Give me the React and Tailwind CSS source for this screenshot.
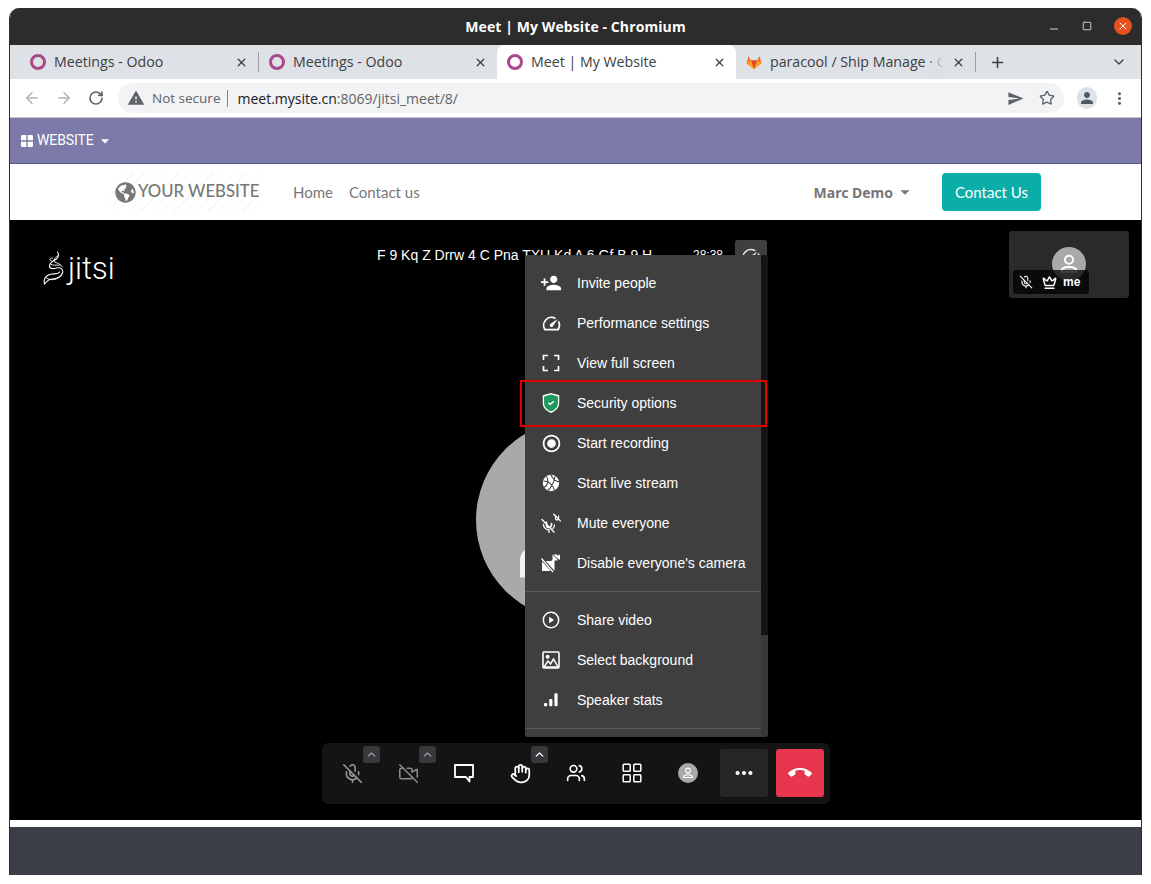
import { ArrowLeft, ArrowRight, RotateCw, Plus, ChevronDown, ChevronUp, X, Star, MicOff, VideoOff, Hand, Users, Ellipsis, Minus, Square, Crown } from 'lucide-react'
import { MdPersonAdd, MdOutlineSpeed, MdRadioButtonChecked, MdSend, MdWarning, MdPerson, MdMoreVert, MdCallEnd, MdWindow, MdArrowDropDown } from 'react-icons/md'
import { FaGlobeAmericas } from 'react-icons/fa'

const ui = 'font-["Open_Sans",sans-serif]'

function OdooFavicon() {
  return <span className="block w-[16px] h-[16px] rounded-full border-[3.5px] border-[#a9498c] shrink-0" />
}

function GitlabIcon() {
  return (
    <svg width="16" height="16" viewBox="0 0 16 16" className="shrink-0">
      <polygon points="8,15 0.5,9.5 2.5,2 4.8,6.5 11.2,6.5 13.5,2 15.5,9.5" fill="#fc6d26" />
      <polygon points="8,15 4.8,6.5 11.2,6.5" fill="#e24329" />
      <polygon points="8,15 0.5,9.5 4.8,6.5" fill="#fca326" />
      <polygon points="8,15 15.5,9.5 11.2,6.5" fill="#fca326" />
    </svg>
  )
}

function Tab({ icon, title, active, width, fade }) {
  return (
    <div className={`relative flex items-center h-[34px] pl-[10px] pr-[10px] gap-[8px] shrink-0 ${active ? 'bg-white rounded-t-lg' : ''}`} style={{ width }}>
      {icon}
      <span className="relative flex-1 overflow-hidden whitespace-nowrap text-[14.2px] text-[#3c4043]">
        {title}
        {fade && <span className="absolute right-0 top-0 bottom-0 w-[18px] bg-gradient-to-r from-transparent to-[#dee1e6]" />}
      </span>
      <X size={13} strokeWidth={2.4} className="text-[#3c4043] shrink-0" />
    </div>
  )
}

function FullscreenIcon() {
  return (
    <svg width="18" height="18" viewBox="0 0 18 18" fill="none" stroke="#fff" strokeWidth="1.7">
      <path d="M1.5 6 V1.5 H6 M12 1.5 H16.5 V6 M16.5 12 V16.5 H12 M6 16.5 H1.5 V12" />
    </svg>
  )
}

function ShieldIcon() {
  return (
    <svg width="22" height="22" viewBox="0 0 20 20">
      <path d="M10 0.8 L17.5 3 V10 C17.5 14.5 14 17.5 10 19 C6 17.5 2.5 14.5 2.5 10 V3 Z" fill="#fff" />
      <path d="M10 2.2 L16.3 4 V10 C16.3 13.8 13.4 16.4 10 17.7 C6.6 16.4 3.7 13.8 3.7 10 V4 Z" fill="#1d9a5b" />
      <path d="M7.6 9.8 L9.2 11.2 L12.6 8.4" stroke="#fff" strokeWidth="1.4" fill="none" />
    </svg>
  )
}

function GlobeIcon() {
  return (
    <svg width="18" height="18" viewBox="0 0 18 18" fill="none">
      <circle cx="9" cy="9" r="8.2" fill="#fff" />
      <path d="M4.5 2.5 C7 6 6.5 11 2 13.5 M9 1 C11 6 15 8 17 7.5 M1.5 7 C6 7 11 10 12.5 16.5 M13 2.5 C12 8 9.5 13 6 16.5" stroke="#3f3f3f" strokeWidth="1.1" />
    </svg>
  )
}

function MuteAllIcon() {
  return (
    <svg width="20" height="20" viewBox="0 0 20 20" fill="none" stroke="#fff" strokeLinecap="round">
      <path d="M5.5 9 V12 A2.5 2.5 0 0 0 10.5 12 V10.5" strokeWidth="1.7" />
      <path d="M2.5 11.5 A5.5 5.5 0 0 0 8 17 V19.5 M13.5 12 A5.5 5.5 0 0 1 12 15.5" strokeWidth="1.3" />
      <path d="M1 6.5 L13 19" strokeWidth="1.4" />
      <path d="M14.5 2.5 V5.5 A1.5 1.5 0 0 0 17.5 5.5 V3" strokeWidth="1.3" />
      <path d="M12.5 1 L19.5 8" strokeWidth="1.1" />
    </svg>
  )
}

function CameraAllIcon() {
  return (
    <svg width="20" height="20" viewBox="0 0 20 20" fill="none">
      <path d="M1 8 H10 L13.5 5.5 V18 H1 Z" fill="#fff" />
      <path d="M0 5 L13 19.5" stroke="#3f3f3f" strokeWidth="3" />
      <path d="M0.5 5.5 L12 19" stroke="#fff" strokeWidth="1.3" />
      <path d="M11.5 1.5 H16.5 V3 L19 1.5 V7 L16.5 5.5 V7.5 H11.5 Z" fill="#fff" />
      <path d="M11 0.5 L19 8.5" stroke="#3f3f3f" strokeWidth="1" />
    </svg>
  )
}

function PlayCircleIcon() {
  return (
    <svg width="18" height="18" viewBox="0 0 18 18" fill="none">
      <circle cx="9" cy="9" r="7.7" stroke="#fff" strokeWidth="1.5" />
      <path d="M7.2 5.8 L12 9 L7.2 12.2 Z" fill="#fff" />
    </svg>
  )
}

function BackgroundIcon() {
  return (
    <svg width="18" height="18" viewBox="0 0 18 18" fill="none">
      <rect x="1" y="1" width="16" height="16" rx="1" stroke="#fff" strokeWidth="1.6" />
      <circle cx="5.6" cy="5.8" r="2" fill="#fff" />
      <path d="M2 16 L6 10 L8.5 13 L11.5 8 L16 16 Z" stroke="#fff" strokeWidth="1.5" />
    </svg>
  )
}

function StatsIcon() {
  return (
    <svg width="16" height="16" viewBox="0 0 16 16" fill="#fff">
      <rect x="1" y="11" width="3.2" height="3.2" rx="1" />
      <rect x="6.2" y="7" width="3.2" height="7.2" rx="1" />
      <rect x="11.4" y="1.2" width="3.2" height="13" rx="1" />
    </svg>
  )
}

function GridIcon() {
  return (
    <svg width="20" height="20" viewBox="0 0 20 20" fill="none" stroke="#fff" strokeWidth="1.5">
      <rect x="1.2" y="1.2" width="7" height="7" rx="0.8" />
      <rect x="11.8" y="1.2" width="7" height="7" rx="0.8" />
      <rect x="1.2" y="11.8" width="7" height="7" rx="0.8" />
      <rect x="11.8" y="11.8" width="7" height="7" rx="0.8" />
    </svg>
  )
}

function ChatIcon() {
  return (
    <svg width="20" height="20" viewBox="0 0 20 20" fill="none" stroke="#fff" strokeWidth="1.8" strokeLinejoin="round">
      <path d="M1 2 H19 V14 H15.5 V18.5 L12 14 H1 Z" />
    </svg>
  )
}

function AvatarPerson({ size, className }) {
  return (
    <svg width={size} height={size} viewBox="0 0 20 20" fill="none" stroke="#fff" strokeWidth="1.6" className={className}>
      <circle cx="10" cy="6.5" r="3.4" />
      <path d="M3.5 16.5 C3.5 13 6.5 12.5 10 12.5 C13.5 12.5 16.5 13 16.5 16.5 Z" />
    </svg>
  )
}

function BigAvatarPerson() {
  return (
    <svg width="200" height="200" viewBox="0 0 200 200" fill="none" stroke="#f2f2f2" strokeWidth="5">
      <circle cx="100" cy="80" r="28" />
      <path d="M46.5 155 V140 C46.5 130 60 124 100 124 C140 124 153.5 130 153.5 140 V155 Z" />
    </svg>
  )
}

function JitsiLogo() {
  return (
    <svg width="25" height="34" viewBox="0 0 24 34" fill="none" stroke="#fff" strokeWidth="1.1" strokeLinecap="round">
      <path d="M15 1 C17 4 16 6 14 8 C10 10 7 12 7 15 C7 18 11 18 14 17 C18 16 21 18 20 22 C19 26 14 28 10 28 C7 28 5 29 2 33 C1 29 2 26 6 24 C10 22 15 24 17 21" />
      <path d="M15 5 C12 7 11 9 12 11 C15 12 18 13 20 16 M8 13 C10 15 14 14 17 14 M4 27 C8 30 14 29 18 25 M9 10 C6 9 7 7 10 7" strokeWidth="0.9" />
    </svg>
  )
}

const menuTop = [
  [<MdPersonAdd size={22} color="#fff" />, 'Invite people'],
  [<MdOutlineSpeed size={21} color="#fff" />, 'Performance settings'],
  [<FullscreenIcon />, 'View full screen'],
  [<ShieldIcon />, 'Security options'],
  [<MdRadioButtonChecked size={21} color="#fff" />, 'Start recording'],
  [<GlobeIcon />, 'Start live stream'],
  [<MuteAllIcon />, 'Mute everyone'],
  [<CameraAllIcon />, "Disable everyone's camera"],
]

const menuBottom = [
  [<PlayCircleIcon />, 'Share video'],
  [<BackgroundIcon />, 'Select background'],
  [<StatsIcon />, 'Speaker stats'],
]

function MenuRow({ icon, label }) {
  return (
    <div className="flex items-center h-[40px]">
      <span className="w-[52px] flex justify-center shrink-0">{icon}</span>
      <span className="text-[14px] text-white whitespace-nowrap">{label}</span>
    </div>
  )
}

function Caret({ dim }) {
  return (
    <span className="absolute -top-[3px] right-[-16px] w-[17px] h-[17px] rounded-[3px] bg-[#36383c] flex items-center justify-center">
      <ChevronUp size={13} strokeWidth={2.5} color={dim ? '#a0a0a0' : '#fff'} />
    </span>
  )
}

function ToolButton({ children, caret, dim }) {
  return (
    <div className="relative w-[24px] h-[48px] flex items-center justify-center">
      {children}
      {caret && <Caret dim={dim} />}
    </div>
  )
}

export default function App() {
  return (
    <div className="w-[1151px] h-[884px] bg-white pt-[8px] pl-[9px] pr-[9px] overflow-hidden font-['Liberation_Sans',sans-serif]">
      <div className="h-[867px] flex flex-col rounded-t-[10px] overflow-hidden border-x border-[#2c2c2c]">
        {/* Title bar */}
        <div className="relative h-[37px] bg-[#2c2c2c] flex items-center justify-center shrink-0">
          <span className={`${ui} text-[14px] font-bold text-white tracking-[0.1px]`}>Meet | My Website - Chromium</span>
          <div className="absolute right-[9px] top-[9px] flex items-center gap-[22px]">
            <Minus size={12} color="#fff" strokeWidth={1.6} className="mt-[6px]" />
            <Square size={10} color="#fff" strokeWidth={1.8} />
            <span className="w-[18px] h-[18px] rounded-full bg-[#e6511f] flex items-center justify-center">
              <X size={12} color="#fff" strokeWidth={2} />
            </span>
          </div>
        </div>

        {/* Tabs */}
        <div className={`${ui} h-[34px] bg-[#dee1e6] flex items-center pl-[10px] shrink-0`}>
          <Tab icon={<OdooFavicon />} title="Meetings - Odoo" width={238} />
          <span className="w-px h-[20px] bg-[#9aa0a6] shrink-0" />
          <Tab icon={<OdooFavicon />} title="Meetings - Odoo" width={238} />
          <Tab icon={<OdooFavicon />} title="Meet | My Website" width={239} active />
          <Tab icon={<GitlabIcon />} title="paracool / Ship Manage · GitLab" width={239} fade />
          <span className="w-px h-[20px] bg-[#9aa0a6] shrink-0" />
          <Plus size={17} strokeWidth={2.2} className="ml-[13px] text-[#3c4043]" />
          <ChevronDown size={16} strokeWidth={2} className="ml-auto mr-[14px] text-[#3c4043]" />
        </div>

        {/* Address bar */}
        <div className="h-[38px] bg-white border-b border-[#c4c7cc] flex items-center pl-[13px] shrink-0 box-content">
          <ArrowLeft size={18} strokeWidth={2} className="text-[#b3b5b8]" />
          <ArrowRight size={18} strokeWidth={2} className="ml-[14px] text-[#b3b5b8]" />
          <RotateCw size={16} strokeWidth={2.4} className="ml-[15px] text-[#5f6368]" />
          <div className="ml-[14px] w-[946px] h-[30px] rounded-full bg-[#f1f3f4] flex items-center pl-[9px]">
            <MdWarning size={18} color="#5f6368" />
            <span className={`${ui} ml-[7px] text-[13.5px] text-[#5f6368]`}>Not secure</span>
            <span className="w-px h-[17px] bg-[#80868b] ml-[7px]" />
            <span className={`${ui} ml-[9px] text-[14px] text-[#202124]`}>meet.mysite.cn<span className="text-[#5f6368]">:8069/jitsi_meet/8/</span></span>
            <MdSend size={17} color="#5f6368" className="ml-auto" />
            <Star size={16} strokeWidth={2} className="ml-[15px] mr-[9px] text-[#5f6368]" />
          </div>
          <span className="ml-[13px] w-[20px] h-[22px] rounded-full bg-[#dee1e6] flex items-center justify-center">
            <MdPerson size={18} color="#4d5a6b" />
          </span>
          <MdMoreVert size={19} color="#5f6368" className="ml-[13px]" />
        </div>

        {/* Odoo admin bar */}
        <div className="h-[46px] bg-[#7c7aa9] border-b border-[#5c5a85] flex items-center pl-[9px] text-white shrink-0">
          <MdWindow size={16} color="#fff" />
          <span className="ml-[2px] text-[14px] font-['Roboto',sans-serif] tracking-[-0.1px]">WEBSITE</span>
          <MdArrowDropDown size={20} color="#fff" className="ml-[1px]" />
        </div>

        {/* Site nav */}
        <div className="h-[56px] bg-white flex items-center shrink-0 font-['Lato',sans-serif]">
          <div className="ml-[101px] w-[150px] h-[40px] flex items-center pl-[4px] gap-[2px] shrink-0 bg-[repeating-linear-gradient(135deg,#f6f6f6_0,#f6f6f6_1px,#ffffff_1px,#ffffff_8px)]">
            <FaGlobeAmericas size={21} color="#777" className="shrink-0" />
            <span className="text-[16.7px] font-medium text-[#777] whitespace-nowrap">YOUR WEBSITE</span>
          </div>
          <span className="ml-[32px] text-[15px] text-[#777]">Home</span>
          <span className="ml-[16px] text-[15px] text-[#777]">Contact us</span>
          <span className="ml-auto text-[14px] font-bold text-[#777] font-['Noto_Sans',sans-serif]">Marc Demo</span>
          <MdArrowDropDown size={22} color="#777" className="ml-[1px]" />
          <span className="ml-[26px] mr-[100px] w-[99px] h-[38px] rounded-[4px] bg-[#0bada8] text-white text-[15px] flex items-center justify-center">Contact Us</span>
        </div>

        {/* Jitsi stage */}
        <div className="relative h-[600px] bg-black shrink-0 overflow-hidden">
          <div className="absolute left-[32px] top-[31px] flex items-center gap-[1px]">
            <JitsiLogo />
            <span className="text-[31px] leading-none font-light text-white font-['Roboto',sans-serif]">jitsi</span>
          </div>

          <span className="absolute left-[367px] top-[25px] text-[14px] text-white whitespace-nowrap">F 9 Kq Z Drrw 4 C Pna TXU Kd A 6 Gf B 9 H</span>
          <span className="absolute left-[683px] top-[26px] text-[12px] text-white">28:38</span>
          <div className="absolute left-[725px] top-[20px] w-[32px] h-[32px] rounded-[3px] bg-[#3f3f3f] flex items-start justify-center pt-[5px]">
            <MdOutlineSpeed size={22} color="#ddd" />
          </div>

          {/* big avatar */}
          <div className="absolute left-[466px] top-[200px] w-[200px] h-[200px] rounded-full bg-[#a9a9a9]">
            <BigAvatarPerson />
          </div>

          {/* own thumbnail */}
          <div className="absolute left-[999px] top-[11px] w-[120px] h-[67px] rounded-[3px] bg-[#2a2a2a] flex justify-center pt-[16px]">
            <div className="w-[34px] h-[34px] rounded-full bg-[#a9a9a9] flex items-center justify-center">
              <AvatarPerson size={24} />
            </div>
            <div className="absolute left-[4px] bottom-[4px] w-[76px] h-[24px] rounded-[3px] bg-black/75 flex items-center pl-[6px] gap-[9px]">
              <MicOff size={14} color="#fff" strokeWidth={1.8} />
              <Crown size={15} color="#fff" strokeWidth={2.4} />
              <span className="text-[12px] font-bold text-white -ml-[3px]">me</span>
            </div>
          </div>

          {/* overflow menu */}
          <div className="absolute left-[515px] top-[35px] w-[243px] h-[482px] rounded-[3px] bg-[#3f3f3f] overflow-hidden flex">
            <div className="w-[236px] pt-[8px] shrink-0">
              {menuTop.map(([icon, label]) => <MenuRow key={label} icon={icon} label={label} />)}
              <div className="h-px bg-[#5a5a5a] mt-[8px] mb-[8px]" />
              {menuBottom.map(([icon, label]) => <MenuRow key={label} icon={icon} label={label} />)}
              <div className="h-px bg-[#5a5a5a] mt-[8px]" />
            </div>
            <div className="w-[7px] bg-[#393939] flex flex-col">
              <div className="h-[380px] bg-[#141414]" />
            </div>
          </div>

          {/* highlight drawn on top of the shot */}
          <div className="absolute left-[510px] top-[160px] w-[247px] h-[47px] border-2 border-[#e00000]" />

          {/* toolbar */}
          <div className="absolute left-[312px] top-[523px] w-[508px] h-[61px] rounded-[6px] bg-[#141414] flex items-start pt-[6px] pl-[18px]">
            <div className="flex items-center gap-[32px]">
              <ToolButton caret dim><MicOff size={21} color="#9a9a9a" strokeWidth={1.8} /></ToolButton>
              <ToolButton caret dim><VideoOff size={21} color="#8a8a8a" strokeWidth={1.8} /></ToolButton>
              <ToolButton><ChatIcon /></ToolButton>
              <ToolButton caret><Hand size={21} color="#fff" strokeWidth={2} /></ToolButton>
              <ToolButton><Users size={20} color="#fff" strokeWidth={2} /></ToolButton>
              <ToolButton><GridIcon /></ToolButton>
              <ToolButton>
                <span className="w-[20px] h-[20px] rounded-full bg-[#a9a9a9] flex items-center justify-center shrink-0">
                  <AvatarPerson size={14} />
                </span>
              </ToolButton>
            </div>
            <div className="ml-[20px] w-[48px] h-[48px] rounded-[3px] bg-[#262626] flex items-center justify-center">
              <Ellipsis size={22} color="#fff" strokeWidth={2.6} />
            </div>
            <div className="ml-[8px] w-[48px] h-[48px] rounded-[3px] bg-[#e8364f] flex items-center justify-center">
              <MdCallEnd size={24} color="#fff" />
            </div>
          </div>
        </div>

        <div className="h-[7px] bg-white shrink-0" />
        <div className="flex-1 bg-[#3a3f47]" />
      </div>
    </div>
  )
}
